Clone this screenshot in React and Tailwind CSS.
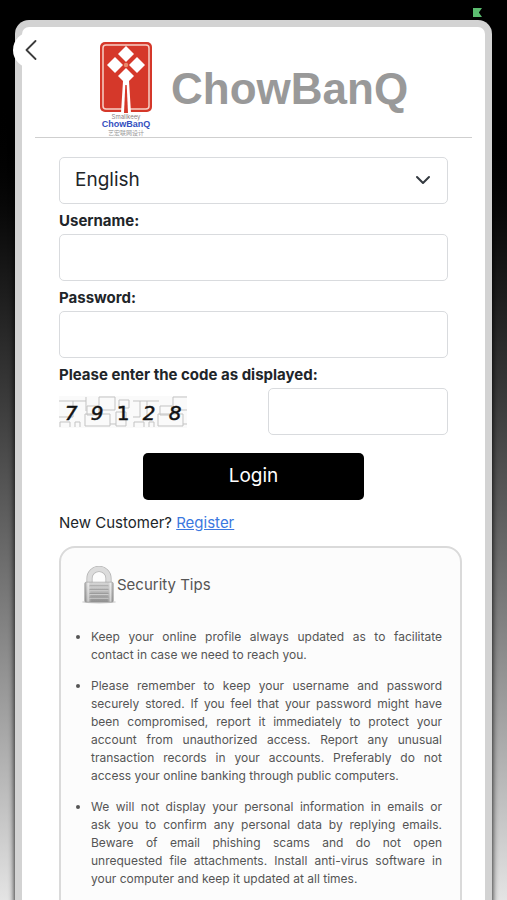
import React from 'react';

// \u00a0 keeps a few word pairs together when the paragraph wraps
const TIPS = [
  'Keep your online profile always updated as to facilitate contact in case we need to reach you.',
  'Please remember to keep your username and password securely stored. If you feel that your password might have been compromised, report it immediately to protect your account from unauthorized access. Report any unusual transaction records in your accounts. Preferably do not access your online banking through public computers.',
  'We will not display your personal information in emails or ask\u00a0you to confirm any personal data by replying emails. Beware\u00a0of email phishing scams and do not open unrequested\u00a0file attachments. Install anti-virus software in your\u00a0computer and keep it updated at all times.',
];

const FIELD = 'block h-[47px] w-full rounded-[5px] border border-[#d9dbde] bg-white px-[15px] text-[19px] text-[#212529]';
const LABEL = 'block pt-2 pb-1 text-[15px] leading-[18px] font-bold';

function Logo() {
  return (
    <div className="flex w-[54px] flex-col items-center">
      <svg viewBox="0 0 54 72" className="h-[72px] w-[54px]" aria-hidden="true">
        <rect x="1" y="1" width="52" height="70" rx="5" fill="#d5382a" />
        <rect x="4" y="4" width="46" height="64" rx="3" fill="none" stroke="#f6cfc6" strokeWidth="1.5" />
        <path d="M27 5l8 8-8 8-8-8zM16 16l8 8-8 8-8-8zM38 16l8 8-8 8-8-8zM27 27l8 8-8 8-8-8z" fill="#fff" />
        <path d="M24 40h6l2 32H22z" fill="#fff" />
        <path d="M26.300 44h1.400l1.300 28h-4z" fill="#d5382a" />
        <path d="M23 20l8 8M31 20l-8 8" stroke="#d5382a" strokeWidth="1" />
        <circle cx="27" cy="24" r="2.200" fill="#e8896a" />
      </svg>
      <span className="text-[6px] leading-[7px] text-[#8a7f7f]">Smallkeey</span>
      <span className="font-['Liberation_Sans',sans-serif] text-[9px] leading-[8px] font-bold text-[#3450c0]">ChowBanQ</span>
      <span className="font-['Noto_Sans_CJK_SC',sans-serif] text-[6px] leading-[9px] whitespace-nowrap text-[#999]">艺宏联网设计</span>
    </div>
  );
}

function Captcha() {
  return (
    <svg viewBox="0 0 128 32" className="h-8 w-32" role="img" aria-label="Verification code">
      <rect width="128" height="32" fill="#fafafa" />
      <path
        d="M0 5h27M14 5v16M27 1v14M0 21h14M1 31v-5h10v5M16 31v-5h5v5M28 10h12v9H28zM40 1h16v13H40zM26 18h25v12H26zM51 28h6M57 16h10v14H57zM60 4h10v8H60zM74 5h26M88 5v16M81 5v16H74M75 31v-5h10v5M90 31v-5h5v5M101 10h12v9h-12zM128 1h-14v13h14M99 18h25v12H99zM124 28h4"
        fill="none"
        stroke="#c3c3c3"
      />
      <g fill="#111" stroke="#111" strokeWidth=".5" fontFamily="DejaVu Sans, sans-serif" fontSize="20" textAnchor="middle">
        <text x="12" y="24" fontStyle="italic">7</text>
        <text x="38" y="24" fontStyle="italic">9</text>
        <text x="64" y="24">1</text>
        <text x="90" y="24" fontStyle="italic">2</text>
        <text x="116" y="24" fontStyle="italic">8</text>
      </g>
    </svg>
  );
}

function Padlock() {
  return (
    <svg viewBox="0 0 36 40" className="h-[38px] w-9" aria-hidden="true">
      <defs>
        <linearGradient id="lockBody" x1="0" y1="0" x2="0" y2="1">
          <stop offset="0" stopColor="#dedede" />
          <stop offset="1" stopColor="#8e8e8e" />
        </linearGradient>
        <linearGradient id="lockShade" x1="0" y1="0" x2="1" y2="0">
          <stop offset="0" stopColor="#777" stopOpacity=".5" />
          <stop offset=".12" stopColor="#fff" stopOpacity=".6" />
          <stop offset=".25" stopColor="#999" stopOpacity=".1" />
          <stop offset=".78" stopColor="#999" stopOpacity=".1" />
          <stop offset=".9" stopColor="#fff" stopOpacity=".6" />
          <stop offset="1" stopColor="#777" stopOpacity=".5" />
        </linearGradient>
      </defs>
      <ellipse cx="18" cy="38" rx="18" ry="1.500" fill="#ccc" />
      <path d="M8 20V13a10 10 0 0 1 20 0v7" fill="none" stroke="#b5b5b5" strokeWidth="6.500" />
      <path d="M8 20V13a10 10 0 0 1 20 0v7" fill="none" stroke="#dcdcdc" strokeWidth="4.800" />
      <rect x="3" y="17" width="30" height="21" rx="1.500" fill="url(#lockBody)" />
      <rect x="3" y="17" width="30" height="21" rx="1.500" fill="url(#lockShade)" stroke="#999" strokeWidth=".6" />
      <path d="M8 21h20M8 25h20M8 29h20M8 33h20" stroke="#9a9a9a" />
      <path d="M8 22h20M8 26h20M8 30h20M8 34h20" stroke="#d8d8d8" strokeWidth=".8" />
    </svg>
  );
}

export default function App() {
  return (
    <div className="relative h-screen overflow-hidden bg-linear-to-b from-black from-10% to-[#e4e4e4] px-[15px] pt-5 font-[Inter,sans-serif] text-[#212529]">
      <span className="absolute top-2 right-[25px] h-[9px] w-[9px] bg-[#5cbd70] [clip-path:polygon(0_0,100%_0,65%_50%,100%_100%,0_100%)]" />
      <main className="rounded-t-[14px] border-[7px] border-b-0 border-[#d3d3d3] bg-white px-[13px] shadow-[0_0_6px_#000]">
        <button
          type="button"
          aria-label="Back"
          className="absolute top-8 left-[13px] flex h-9 w-9 items-center justify-center rounded-full bg-white"
        >
          <svg viewBox="0 0 12 20" className="h-5 w-3" fill="none" stroke="#3c3c3c" strokeWidth="1.800" strokeLinecap="round" strokeLinejoin="round">
            <path d="M10.500 1L1.500 10l9 9" />
          </svg>
        </button>
        <header className="flex h-[111px] border-b border-[#cfcfcf] pt-[14px] pl-16">
          <Logo />
          <h1 className="pt-6 pl-[18px] font-['Liberation_Sans',sans-serif] text-[44px] leading-[48px] font-bold text-[#999]">ChowBanQ</h1>
        </header>

        <form className="px-6 pt-[19px]" onSubmit={(e) => e.preventDefault()}>
          <div className="relative">
            <select aria-label="Language" className={`${FIELD} appearance-none`} defaultValue="English">
              <option>English</option>
            </select>
            <svg viewBox="0 0 16 16" className="pointer-events-none absolute top-[15px] right-[17px] h-4 w-4" fill="none" stroke="#343a40" strokeWidth="2" strokeLinecap="round" strokeLinejoin="round">
              <path d="M2 5l6 6 6-6" />
            </svg>
          </div>
          <label htmlFor="username" className={LABEL}>Username:</label>
          <input id="username" type="text" className={FIELD} />
          <label htmlFor="password" className={LABEL}>Password:</label>
          <input id="password" type="password" className={FIELD} />
          <label htmlFor="code" className={LABEL}>Please enter the code as displayed:</label>
          <div className="flex items-center justify-between">
            <Captcha />
            <div className="w-[180px]">
              <input id="code" type="text" className={FIELD} />
            </div>
          </div>
          <button type="submit" className="mx-auto mt-[18px] block h-[47px] w-[221px] rounded-[5px] bg-black text-[19px] text-white">
            Login
          </button>
          <p className="pt-3 text-[15px] leading-[22px]">
            New Customer? <a href="#register" className="text-[#3b78e0] underline">Register</a>
          </p>
        </form>

        <section className="mt-3 mr-[10px] ml-6 rounded-2xl border-2 border-[#dadada] bg-[#fcfcfc] pr-[18px] pb-8 pl-[30px] text-[#555]">
          <h2 className="-ml-[10px] flex items-center pt-[18px] text-[15px]">
            <Padlock />
            Security Tips
          </h2>
          <ul className="list-disc pt-6 text-justify text-[12px] leading-[18px]">
            {TIPS.map((tip) => (
              <li key={tip} className="mb-[13px]">{tip}</li>
            ))}
          </ul>
        </section>
      </main>
    </div>
  );
}
